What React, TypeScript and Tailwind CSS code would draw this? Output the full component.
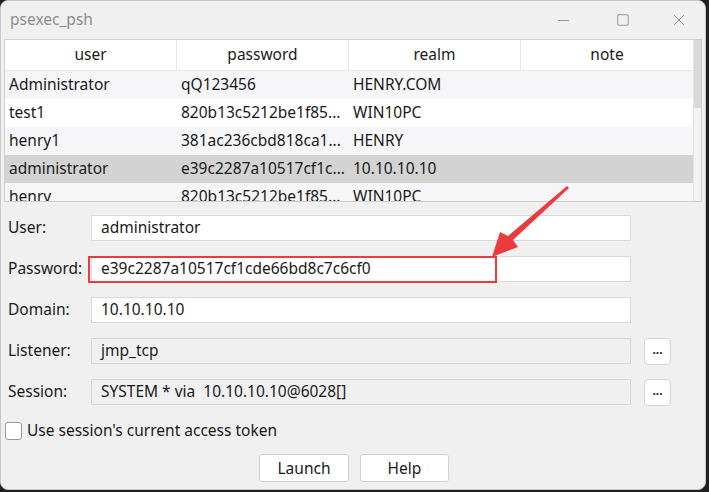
import { Minus, Square, X } from 'lucide-react';

const rows = [
  { user: 'Administrator', password: 'qQ123456', realm: 'HENRY.COM', note: '' },
  { user: 'test1', password: '820b13c5212be1f85...', realm: 'WIN10PC', note: '' },
  { user: 'henry1', password: '381ac236cbd818ca1...', realm: 'HENRY', note: '' },
  { user: 'administrator', password: 'e39c2287a10517cf1c...', realm: '10.10.10.10', note: '', selected: true },
  { user: 'henry', password: '820b13c5212be1f85...', realm: 'WIN10PC', note: '' },
];

const columns = ['user', 'password', 'realm', 'note'];

const Field = ({ label, value, disabled, picker, marked }: { label: string; value: string; disabled?: boolean; picker?: boolean; marked?: boolean }) => (
  <div className="flex items-center h-[26px]">
    <div className="w-[90px] pl-[7px] text-[15.5px] text-[#1a1a1a]">{label}</div>
    <div
      className={`relative w-[540px] h-[26px] flex items-center pl-[9px] border text-[15.5px] text-[#1a1a1a] whitespace-pre ${
        disabled ? 'bg-[#f0f0f0] border-[#d6d6d6]' : 'bg-white border-[#d9d9d9]'
      }`}
    >
      {value}
      {marked && (
        <div className="absolute left-[-4px] top-[-1px] w-[409px] h-[27px] border-2 border-[#ec3b3f]" />
      )}
    </div>
    {picker && (
      <button className="ml-[13px] w-[27px] h-[27px] bg-white border border-[#d4d4d4] rounded-[4px] text-[12px] font-bold leading-none pb-[2px] text-[#1a1a1a]">
        ...
      </button>
    )}
  </div>
);

export default function App() {
  return (
    <div className="w-[709px] h-[492px] bg-[#202020] font-['Noto_Sans','Liberation_Sans',sans-serif]">
      <div className="relative w-[706px] h-[490px] bg-[#f0f0f0] rounded-[8px] border border-[#c8c8c8] overflow-hidden flex flex-col">
        {/* title bar */}
        <div className="h-[38px] flex items-center shrink-0">
          <span className="pl-[9px] text-[15.5px] text-[#8c8c8c]">psexec_psh</span>
          <div className="ml-auto flex items-center text-[#6b6b6b]">
            <div className="w-[60px] flex justify-center"><Minus size={17} strokeWidth={1} /></div>
            <div className="w-[60px] flex justify-center"><Square size={14} strokeWidth={1.1} /></div>
            <div className="w-[52px] flex justify-center"><X size={18} strokeWidth={1} /></div>
          </div>
        </div>

        {/* credentials table */}
        <div className="mx-[3px] h-[163px] border border-[#cfcfcf] bg-[#f6f6f8] flex overflow-hidden shrink-0">
          <div className="w-[688px] flex flex-col">
            <div className="flex h-[31px] bg-white border-b border-[#e6e6e6] shrink-0">
              {columns.map((c, i) => (
                <div
                  key={c}
                  className={`w-[172px] flex items-center justify-center text-[15.5px] text-[#1a1a1a] ${i < 3 ? 'border-r border-[#e6e6e6]' : ''}`}
                >
                  {c}
                </div>
              ))}
            </div>
            {rows.map((r, i) => (
              <div
                key={i}
                className={`flex h-[28px] shrink-0 items-center text-[15.5px] text-[#1a1a1a] ${
                  r.selected ? 'bg-[#d3d3d3]' : i % 2 === 0 ? 'bg-[#f6f6f8]' : 'bg-white'
                }`}
              >
                <div className="w-[172px] pl-[4px] whitespace-nowrap">{r.user}</div>
                <div className="w-[172px] pl-[4px] whitespace-nowrap overflow-hidden">{r.password}</div>
                <div className="w-[172px] pl-[4px] whitespace-nowrap">{r.realm}</div>
                <div className="w-[172px] pl-[4px]">{r.note}</div>
              </div>
            ))}
          </div>
          <div className="w-[12px] bg-[#f3f3f3] border-l border-[#e2e2e2]">
            <div className="h-[68px] bg-[#d9d9d9]" />
          </div>
        </div>

        {/* form */}
        <div className="mt-[13px] flex flex-col gap-[15px]">
          <Field label="User:" value="administrator" />
          <Field label="Password:" value="e39c2287a10517cf1cde66bd8c7c6cf0" marked />
          <Field label="Domain:" value="10.10.10.10" />
          <Field label="Listener:" value="jmp_tcp" disabled picker />
          <Field label="Session:" value="SYSTEM * via  10.10.10.10@6028[]" disabled picker />
        </div>

        <div className="mt-[14px] flex items-center pl-[4px]">
          <div className="w-[17px] h-[18px] bg-white border border-[#9a9a9a] rounded-[3px]" />
          <span className="ml-[5px] text-[15.5px] text-[#1a1a1a]">Use session's current access token</span>
        </div>

        <div className="mt-[12px] flex justify-center gap-[11px] pl-[2px]">
          <button className="w-[90px] h-[28px] bg-white border border-[#d0d0d0] rounded-[3px] text-[15.5px] text-[#1a1a1a]">Launch</button>
          <button className="w-[89px] h-[28px] bg-white border border-[#d0d0d0] rounded-[3px] text-[15.5px] text-[#1a1a1a]">Help</button>
        </div>

        {/* annotation arrow */}
        <svg className="absolute left-0 top-0 pointer-events-none" width="706" height="490">
          <polygon
            points="568,187 512,239 517,246 491,256 499,231 507,235 566,185"
            fill="#ec3b3f"
          />
        </svg>
      </div>
    </div>
  );
}
